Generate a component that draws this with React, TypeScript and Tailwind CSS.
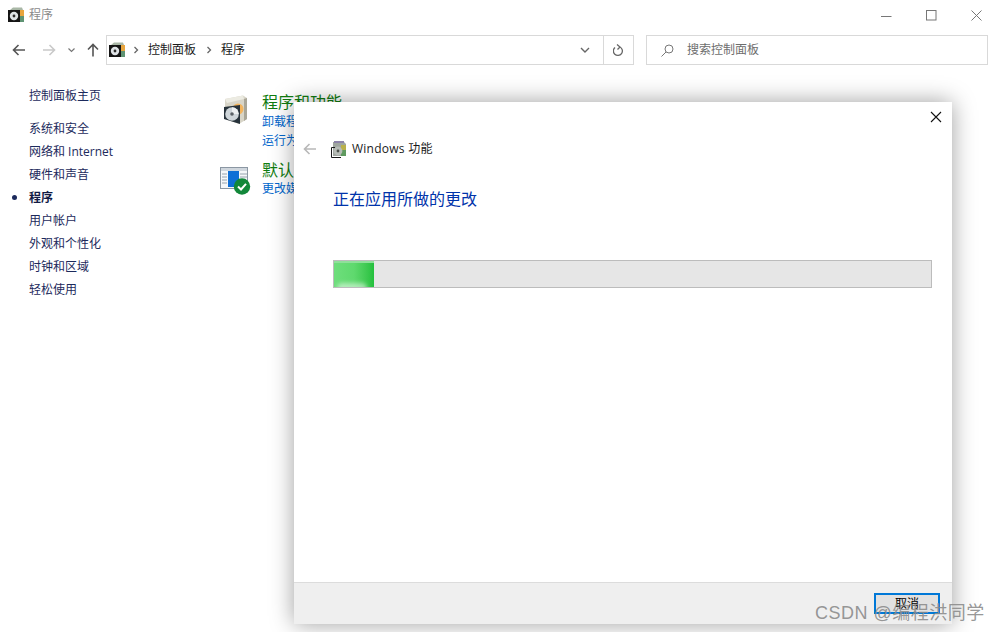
const CJK = `font-['Open_Sans','Noto_Sans_CJK_SC',sans-serif]`;

function ProgIcon({ size = 16 }: { size?: number }) {
  return (
    <svg width={size} height={size} viewBox="0 0 16 16">
      <path d="M2 3 L5 0.5 L14 0.5 L15 3 L15 15 L2 15 Z" fill="#a9b7a6" />
      <rect x="12" y="3" width="4" height="6" fill="#e8a53d" />
      <rect x="12" y="9" width="4" height="6" fill="#5f9373" />
      <rect x="0" y="3" width="12" height="12" fill="#151515" />
      <circle cx="6" cy="9" r="4.2" fill="#dfe3e6" />
      <circle cx="6" cy="9" r="1.4" fill="#2c2c2c" />
    </svg>
  );
}

function FeatureIcon() {
  return (
    <svg width="16" height="17" viewBox="0 0 16 17">
      <path d="M2 1 H13 L15 3 V15 H2 Z" fill="#9fa69f" />
      <rect x="3" y="0" width="10" height="2" fill="#8c84a8" />
      <rect x="10" y="4" width="5" height="5" fill="#b9b04a" />
      <rect x="10" y="9" width="5" height="6" fill="#5f9a5f" />
      <path d="M0.5 6.5 H4 M0.5 6.5 V16.5 H10" fill="none" stroke="#1a1a1a" />
      <circle cx="7" cy="10" r="4.4" fill="#b7bcb7" />
      <circle cx="7" cy="10" r="1.4" fill="#4a4f4a" />
    </svg>
  );
}

function LargeProgIcon() {
  return (
    <svg width="28" height="30" viewBox="0 0 28 30">
      <path d="M3 4 L21 0.5 L25 3 L25 24 L17 29 L3 24 Z" fill="#d8d5c8" />
      <path d="M3 4 L21 0.5 L22 4 L5 8 Z" fill="#ecebe2" />
      <path d="M22 4 L25 3 L25 24 L22 26 Z" fill="#a9a698" />
      <circle cx="16" cy="14" r="5.5" fill="#f2b45e" />
      <path d="M2 12 L18 10 L18 29 L2 24 Z" fill="#27323a" />
      <circle cx="10" cy="19" r="6.8" fill="#cfd6da" />
      <path d="M10 12.2 A6.8 6.8 0 0 1 16.8 19 L10 19 Z" fill="#eef1f2" />
      <circle cx="10" cy="19" r="1.8" fill="#5b6166" />
    </svg>
  );
}

function DefaultIcon() {
  return (
    <svg width="31" height="28" viewBox="0 0 31 28">
      <rect x="0.5" y="0.5" width="27" height="21" fill="#f5f7f9" stroke="#8b97a3" />
      <rect x="1" y="1" width="26" height="3" fill="#cfd6dd" />
      <rect x="8" y="4" width="11" height="16" fill="#0f6fd6" />
      <path d="M2 7h5M2 10h5M2 13h5M2 16h5M20 7h7M20 10h7M20 13h3" stroke="#97a3ae" strokeWidth="1" />
      <circle cx="22" cy="19.5" r="8.2" fill="#12873a" />
      <path d="M18 19.5 L21 22.5 L26 16.8" fill="none" stroke="#fff" strokeWidth="2" />
    </svg>
  );
}

function Arrow({ color, flip }: { color: string; flip?: boolean }) {
  return (
    <svg width="14" height="12" viewBox="0 0 14 12" className={flip ? "rotate-180" : ""}>
      <path d="M13 6H1.5M6.5 1 L1.5 6 L6.5 11" fill="none" stroke={color} strokeWidth="1.6" />
    </svg>
  );
}

function Chevron() {
  return (
    <svg width="6" height="8" viewBox="0 0 6 8">
      <path d="M1.5 1 L4.5 4 L1.5 7" fill="none" stroke="#666" strokeWidth="1.3" />
    </svg>
  );
}

const sideItems = ["系统和安全", "网络和 Internet", "硬件和声音", "程序", "用户帐户", "外观和个性化", "时钟和区域", "轻松使用"];

export default function App() {
  return (
    <div className={`relative w-[1000px] h-[632px] overflow-hidden bg-white text-[12px] ${CJK}`}>
      {/* Title bar */}
      <div className="flex items-center h-[30px] pl-[8px]">
        <ProgIcon />
        <span className="ml-[5px] text-[#8a8a8a] leading-none">程序</span>
        <div className="ml-auto flex items-center pr-[18px] gap-[34px]">
          <svg width="11" height="11" viewBox="0 0 11 11"><path d="M0 6.5H10.5" stroke="#777" /></svg>
          <svg width="11" height="11" viewBox="0 0 11 11"><rect x="0.5" y="0.5" width="9.5" height="9.5" fill="none" stroke="#777" /></svg>
          <svg width="11" height="11" viewBox="0 0 11 11"><path d="M0.5 0.5L10.5 10.5M10.5 0.5L0.5 10.5" stroke="#777" /></svg>
        </div>
      </div>

      {/* Nav row */}
      <div className="flex items-center h-[30px] mt-[5px]">
        <div className="flex items-center w-[106px] pl-[12px]">
          <Arrow color="#555" />
          <span className="ml-[16px]"><Arrow color="#c9c9c9" flip /></span>
          <svg className="ml-[12px]" width="7" height="5" viewBox="0 0 7 5"><path d="M0.5 0.5 L3.5 3.5 L6.5 0.5" fill="none" stroke="#777" strokeWidth="1.2" /></svg>
          <svg className="ml-[12px]" width="12" height="14" viewBox="0 0 12 14"><path d="M6 13.5V1.5M1 6.5 L6 1.5 L11 6.5" fill="none" stroke="#555" strokeWidth="1.6" /></svg>
        </div>
        <div className="flex items-center w-[528px] h-[30px] border border-[#d9d9d9]">
          <span className="ml-[2px]"><ProgIcon /></span>
          <span className="ml-[8px]"><Chevron /></span>
          <span className="ml-[9px] text-[#1a1a1a]">控制面板</span>
          <span className="ml-[10px]"><Chevron /></span>
          <span className="ml-[9px] text-[#1a1a1a]">程序</span>
          <span className="ml-auto mr-[13px]">
            <svg width="10" height="6" viewBox="0 0 10 6"><path d="M1 1 L5 5 L9 1" fill="none" stroke="#666" strokeWidth="1.4" /></svg>
          </span>
          <div className="w-[30px] h-full border-l border-[#d9d9d9] flex items-center justify-center">
            <svg width="11" height="13" viewBox="0 0 11 13"><path d="M2 3.5 A4.5 4.5 0 1 0 7 3M4 0.5 L7 3 L4.5 5.5" fill="none" stroke="#666" strokeWidth="1.3" /></svg>
          </div>
        </div>
        <div className="flex items-center ml-[12px] w-[342px] h-[30px] border border-[#d9d9d9] pl-[14px]">
          <svg width="13" height="13" viewBox="0 0 13 13"><circle cx="8" cy="5" r="4" fill="none" stroke="#777" /><path d="M5 8 L0.5 12.5" stroke="#777" /></svg>
          <span className="ml-[13px] text-[#6d6d6d]">搜索控制面板</span>
        </div>
      </div>

      {/* Main */}
      <div className="flex mt-[18px]">
        <nav className="w-[220px] pl-[29px] text-[#1c2a5c]">
          <div className="leading-[23px] h-[23px] mt-[1px]">控制面板主页</div>
          <ul className="mt-[10px]">
            {sideItems.map((t) => (
              <li key={t} className={`relative leading-[23px] h-[23px] ${t === "程序" ? "font-bold text-[#111a44]" : ""}`}>
                {t === "程序" && <span className="absolute left-[-17px] top-[9px] w-[5px] h-[5px] rounded-full bg-[#1c2a5c]" />}
                {t}
              </li>
            ))}
          </ul>
        </nav>
        <div className="flex-1 pt-[9px]">
          <div className="flex">
            <div className="w-[42px] pl-[2px] pt-[3px]"><LargeProgIcon /></div>
            <div>
              <div className="text-[16px] leading-[20px] text-[#107c10]">程序和功能</div>
              <div className="leading-[19px] text-[#0066cc]">卸载程序</div>
              <div className="leading-[19px] text-[#0066cc]">运行为以前版本</div>
            </div>
          </div>
          <div className="flex mt-[10px]">
            <div className="w-[42px] pt-[7px]"><DefaultIcon /></div>
            <div>
              <div className="text-[16px] leading-[20px] text-[#107c10]">默认程序</div>
              <div className="leading-[18px] text-[#0066cc]">更改媒体</div>
            </div>
          </div>
        </div>
      </div>

      {/* Dialog window */}
      <div className="absolute left-[294px] top-[102px] w-[658px] h-[522px] bg-white flex flex-col shadow-[0_0_22px_rgba(0,0,0,0.38)]">
        <div className="flex justify-end pt-[9px] pr-[10px] h-[26px]">
          <svg width="12" height="12" viewBox="0 0 12 12"><path d="M1 1L11 11M11 1L1 11" stroke="#111" strokeWidth="1.1" /></svg>
        </div>
        <div className="flex items-center h-[20px] mt-[11px] pl-[9px]">
          <Arrow color="#b8b8b8" />
          <span className="ml-[14px]"><FeatureIcon /></span>
          <span className="ml-[5px] text-[#1a1a1a] text-[12px] tracking-[0.25px]">Windows 功能</span>
        </div>
        <div className="pl-[39px] mt-[28px] text-[16px] leading-[24px] text-[#0033aa]">正在应用所做的更改</div>
        <div className="mx-[39px] mr-[20px] mt-[49px] h-[28px] bg-[#e6e6e6] border border-[#bcbcbc] flex">
          <div className="relative w-[40px] h-full overflow-hidden bg-gradient-to-r from-[#6ede7c] via-[#5fd96e] to-[#22c03d] border-t-2 border-t-[#8fe09a]">
            <div className="absolute left-[3px] bottom-[-6px] w-[30px] h-[10px] rounded-full bg-white/50 blur-[2px]" />
          </div>
        </div>
        <div className="mt-auto h-[42px] bg-[#efefef] border-t border-[#dcdcdc] flex justify-end items-start pr-[12px] pt-[10px]">
          <button className="w-[66px] h-[21px] bg-[#e1e1e1] border-2 border-[#0078d7] flex items-center justify-center text-[12px] text-black leading-none">取消</button>
        </div>
      </div>

      {/* Watermark */}
      <div className="absolute left-[815px] top-[601px] text-[18px] leading-[24px] tracking-[0.5px] text-[#8a8a8a]/90 font-['Liberation_Sans','Noto_Sans_CJK_SC',sans-serif]">CSDN @编程洪同学</div>
    </div>
  );
}
